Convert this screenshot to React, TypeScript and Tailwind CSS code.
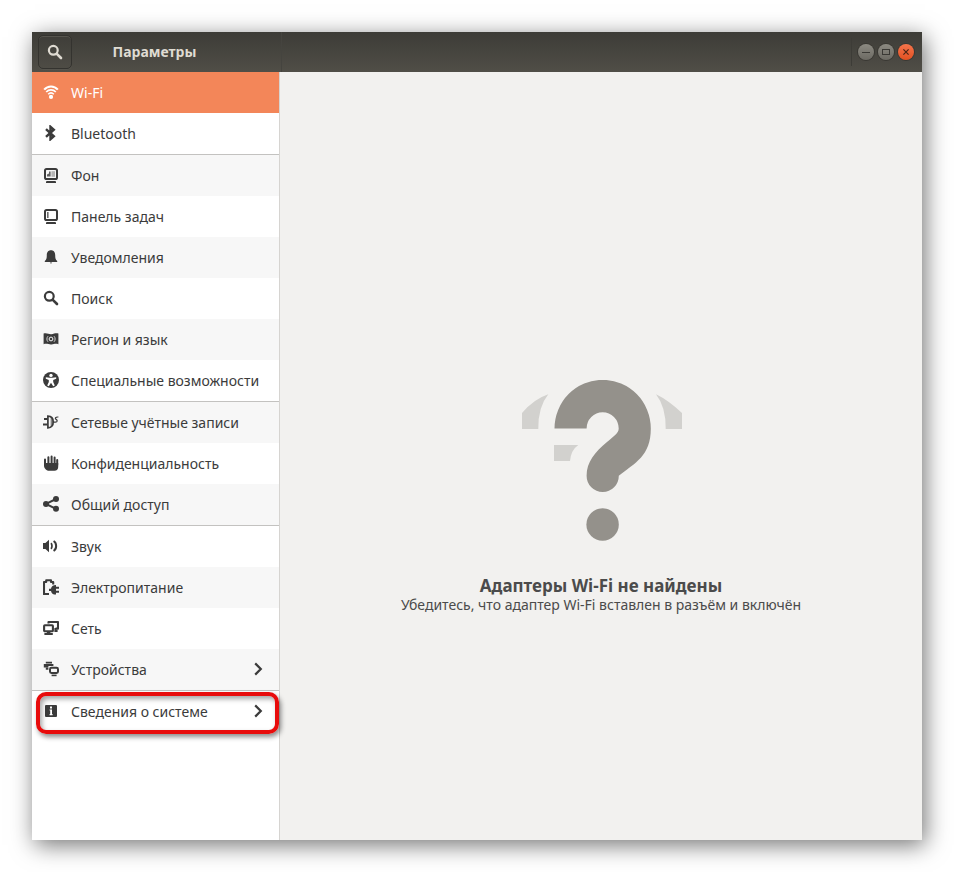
import { useState } from "react";
import type { ReactNode } from "react";

type Item = {
  id: string;
  label: string;
  icon: ReactNode;
  groupStart?: boolean;
  hasChildren?: boolean;
  marked?: boolean;
};

const Icon = ({ children }: { children: ReactNode }) => (
  <svg viewBox="0 0 16 16" className="h-4 w-4 shrink-0" fill="currentColor" aria-hidden="true">
    {children}
  </svg>
);

const SearchIcon = () => (
  <Icon>
    <circle cx="6.3" cy="6.3" r="4.4" fill="none" stroke="currentColor" strokeWidth="2.2" />
    <path d="M9.8 9.8L14 14" stroke="currentColor" strokeWidth="2.6" strokeLinecap="round" />
  </Icon>
);

const ChevronIcon = () => (
  <Icon>
    <path d="M5.2 2.4L10.8 8L5.2 13.6" fill="none" stroke="currentColor" strokeWidth="2.2" />
  </Icon>
);

const items: Item[] = [
  {
    id: "wifi",
    label: "Wi-Fi",
    icon: (
      <Icon>
        <circle cx="8" cy="12.9" r="2.1" />
        <g fill="none" stroke="currentColor">
          <path d="M1.2 5.6C4.8 1.4 11.2 1.4 14.8 5.6" strokeWidth="2.1" />
          <path d="M3.2 8C5.8 5.2 10.2 5.2 12.8 8" strokeWidth="1.7" />
          <path d="M5.2 10.2C6.8 8.6 9.2 8.6 10.8 10.2" strokeWidth="1.6" />
        </g>
      </Icon>
    ),
  },
  {
    id: "bluetooth",
    label: "Bluetooth",
    icon: (
      <Icon>
        <path d="M3 4.2L10.8 11.3L7.5 14.2V1.8L10.8 4.7L3 11.8" fill="none" stroke="currentColor" strokeWidth="2.4" />
      </Icon>
    ),
  },
  {
    id: "background",
    label: "Фон",
    groupStart: true,
    icon: (
      <Icon>
        <rect x="2" y="2" width="12" height="10" rx="1.6" fill="none" stroke="currentColor" strokeWidth="2" />
        <path d="M4 14h8a1 1 0 0 1 1 1v1H3v-1a1 1 0 0 1 1-1z" />
        <path d="M4 9.5V7.6L6 6.6V4.6H7.6V9.5z" opacity=".8" />
        <path d="M8.4 4.2H12V9.8H8.4z" opacity=".35" />
      </Icon>
    ),
  },
  {
    id: "dock",
    label: "Панель задач",
    icon: (
      <Icon>
        <rect x="2" y="2" width="12" height="10" rx="1.6" fill="none" stroke="currentColor" strokeWidth="2" />
        <path d="M4 4h1.6v6H4z" opacity=".75" />
        <path d="M4 14h8a1 1 0 0 1 1 1v1H3v-1a1 1 0 0 1 1-1z" />
      </Icon>
    ),
  },
  {
    id: "notifications",
    label: "Уведомления",
    icon: (
      <Icon>
        <path d="M8 1.2C5 1.2 3.8 3.5 3.8 6.2C3.8 9.3 3.4 10.7 1.8 12V13H14.2V12C12.6 10.7 12.2 9.3 12.2 6.2C12.2 3.5 11 1.2 8 1.2z" />
        <path d="M6.8 13.6H9.2L8 14.8z" />
      </Icon>
    ),
  },
  { id: "search", label: "Поиск", icon: <SearchIcon /> },
  {
    id: "region",
    label: "Регион и язык",
    icon: (
      <Icon>
        <path d="M.6 2.6C4 1.6 6 3.6 8.5 3.2C11 2.8 13 1.8 15.4 2.6V13.2C12.5 12.3 11 13.2 8.5 13.5C6 13.8 4 12.2 .6 13.2z" />
        <g fill="none" stroke="#f7f7f7">
          <circle cx="8" cy="8" r="1.9" strokeWidth="1" />
          <path d="M5 5.2C3.5 6.8 3.5 9.2 5 10.8M11 5.2C12.5 6.8 12.5 9.2 11 10.8" strokeWidth=".8" />
        </g>
      </Icon>
    ),
  },
  {
    id: "accessibility",
    label: "Специальные возможности",
    icon: (
      <Icon>
        <circle cx="8" cy="8" r="8" />
        <circle cx="8" cy="3.4" r="1.7" fill="#fff" />
        <path d="M2.8 5.2L6.5 5.8H9.5L13.2 5.2V6.8L10.2 8V10L11.8 13.6L10.2 14.2L8 10.8L5.8 14.2L4.2 13.6L5.8 10V8L2.8 6.8z" fill="#fff" />
      </Icon>
    ),
  },
  {
    id: "accounts",
    label: "Сетевые учётные записи",
    groupStart: true,
    icon: (
      <Icon>
        <path d="M1 4H4.4V6H1zM0 9.6H4.4V11.6H0z" />
        <path d="M4.9 2.2C8.8 2.2 10.2 5 10.2 8S8.8 13.8 4.9 13.8z" fill="none" stroke="currentColor" strokeWidth="1.7" />
        <path d="M7.6 3V13C9.2 12.3 9.8 10.5 9.8 8S9.2 3.7 7.6 3z" opacity=".6" />
        <path d="M10.5 8.2H12.4C14.8 8.2 14.4 6 13.2 5.4C11.8 4.7 12 2.8 15.4 3" fill="none" stroke="currentColor" strokeWidth="1.2" />
      </Icon>
    ),
  },
  {
    id: "privacy",
    label: "Конфиденциальность",
    icon: (
      <Icon>
        <path
          d="M2 4.5V9M5.4 2.2V9M8.6 1.6V9M11.6 2.4V9M14.2 5V10"
          fill="none"
          stroke="currentColor"
          strokeWidth="2"
          strokeLinecap="round"
        />
        <path d="M1 8H15.2V12C15.2 14.4 13.8 15.8 11.4 15.8H6C3 15.8 1 13 1 10.5z" />
      </Icon>
    ),
  },
  {
    id: "sharing",
    label: "Общий доступ",
    icon: (
      <Icon>
        <path d="M13 3L3 7.9L13 12.8" fill="none" stroke="currentColor" strokeWidth="2" />
        <circle cx="3" cy="7.9" r="3" />
        <circle cx="13" cy="3" r="3" />
        <circle cx="13" cy="12.8" r="3" />
      </Icon>
    ),
  },
  {
    id: "sound",
    label: "Звук",
    groupStart: true,
    icon: (
      <Icon>
        <path d="M0 5H2.4L6 1.8V14.2L2.4 11H0z" />
        <path d="M8 5.2C9.3 6.6 9.3 9.4 8 10.8" fill="none" stroke="currentColor" strokeWidth="1.7" />
        <path d="M10.6 3C14 5 14 11 10.6 13" fill="none" stroke="currentColor" strokeWidth="2" />
      </Icon>
    ),
  },
  {
    id: "power",
    label: "Электропитание",
    icon: (
      <Icon>
        <path d="M6 15H1V3H3.2V1.2H8V3H10.2V5.5" fill="none" stroke="currentColor" strokeWidth="2.1" strokeLinejoin="round" />
        <path d="M13 6V15.6C10 15.6 8.3 14 8 11.9H6V9.7H8C8.3 7.6 10 6 13 6zM13 7.8H16V9.8H13zM13 11.8H16V13.8H13z" />
      </Icon>
    ),
  },
  {
    id: "network",
    label: "Сеть",
    icon: (
      <Icon>
        <path d="M5.5 3.6V2H15V8.6H12.6" fill="none" stroke="currentColor" strokeWidth="2.1" strokeLinejoin="round" />
        <path d="M11.4 8H13.4V10H14.6V12H11.4z" />
        <rect x="1.1" y="5.2" width="8.8" height="6" rx=".8" fill="none" stroke="currentColor" strokeWidth="2.1" />
        <path d="M3.8 12H7.4V13H9.8V15H1.4V13H3.8z" />
      </Icon>
    ),
  },
  {
    id: "devices",
    label: "Устройства",
    hasChildren: true,
    icon: (
      <Icon>
        <path d="M2.8 .8H9V2.4H2.8zM.8 3H10.4V5H5.4V6.4H.8zM2.8 6.8H5.4V8.8H2.8z" />
        <rect x="7" y="6.8" width="8" height="5.2" rx="1.4" fill="none" stroke="currentColor" strokeWidth="2" />
        <path d="M8.6 13.6H13.6V15.2H8.6z" />
      </Icon>
    ),
  },
  {
    id: "about",
    label: "Сведения о системе",
    groupStart: true,
    hasChildren: true,
    marked: true,
    icon: (
      <Icon>
        <rect x="2" y="2" width="12" height="12" rx="1" />
        <path d="M7 3.6H9V5.4H7zM6.6 6.4H9V11H9.6V12.2H6.6V11H7.2V7.6H6.6z" fill="#fff" />
      </Icon>
    ),
  },
];

const HeaderBar = () => (
  <header className="flex h-10 shrink-0 items-center bg-linear-to-b from-[#3d3c37] to-[#504e47] text-[#dfdbd2]">
    <div className="flex h-full w-[250px] shrink-0 items-center border-r border-[#45443f] pl-1.5">
      <button
        type="button"
        aria-label="Поиск"
        className="flex h-[34px] w-[34px] items-center justify-center rounded-[5px] border border-[#34332f] shadow-[inset_0_1px_0_#56544d,0_1px_0_#56544d]"
      >
        <SearchIcon />
      </button>
      <h1 className="flex-1 pr-11 text-center text-sm font-bold">Параметры</h1>
    </div>
    <div className="flex h-full flex-1 items-center justify-end gap-1 pr-2">
      <span className="mr-0.5 h-7 w-px bg-[#3d3c37]" />
      <button type="button" aria-label="Свернуть" className="h-4 w-4 rounded-full bg-linear-to-b from-[#8c8a82] to-[#6c6a63] text-[#3a3935] ring-1 ring-[#393833]">
        <Icon>
          <path d="M4 8H12V9H4z" />
        </Icon>
      </button>
      <button type="button" aria-label="Развернуть" className="h-4 w-4 rounded-full bg-linear-to-b from-[#8c8a82] to-[#6c6a63] text-[#3a3935] ring-1 ring-[#393833]">
        <Icon>
          <rect x="4.5" y="5.5" width="7" height="5" fill="none" stroke="currentColor" />
        </Icon>
      </button>
      <button type="button" aria-label="Закрыть" className="h-4 w-4 rounded-full bg-linear-to-b from-[#f5744b] to-[#e2501f] text-[#4a2415] ring-1 ring-[#393833]">
        <Icon>
          <path d="M5.4 5.4L10.6 10.6M10.6 5.4L5.4 10.6" stroke="currentColor" strokeWidth="1.2" />
        </Icon>
      </button>
    </div>
  </header>
);

const EmptyState = () => (
  <main className="flex flex-1 flex-col items-center justify-center bg-[#f2f1ef] pt-[82px] text-center text-[#4b4b4b]">
    <svg viewBox="0 0 162 162" className="h-[162px] w-[162px]" aria-hidden="true">
      <g fill="#d2d1ce">
        <path d="M2 49V33Q14 19 28.3 14.3Q18 27 18.3 49Z" />
        <path d="M162 49V33Q148 20 136 14.3Q146 27 145.7 49Z" />
        <path d="M34 65V81H50Q51 70 58.3 65Z" />
      </g>
      <g fill="#94918b">
        <path d="M34.5 48.5A48 48.5 0 0 1 130.8 48.5C130.8 76 115 83 98.8 95.7A16 16.3 0 0 1 66.6 95.7C66.6 82 75 72 87 62C94 56 98.7 53 98.7 48.5A16 16.3 0 0 0 66.6 48.5Z" />
        <circle cx="82.6" cy="144.5" r="16.2" />
      </g>
    </svg>
    <h2 className="mt-[34px] text-[17px] leading-5 font-bold">Адаптеры Wi-Fi не найдены</h2>
    <p className="text-sm leading-[18px]">Убедитесь, что адаптер Wi-Fi вставлен в разъём и включён</p>
  </main>
);

const App = () => {
  const [selected, setSelected] = useState("wifi");

  return (
    <div className="flex min-h-screen bg-white p-8 font-['Noto_Sans',sans-serif]">
      <div className="flex flex-1 flex-col shadow-[3px_5px_22px_rgba(0,0,0,0.55)]">
        <HeaderBar />
        <div className="flex flex-1">
          <nav className="w-[248px] shrink-0 border-r border-[#d6d4d1] bg-white">
            <ul>
              {items.map((item) => (
                <li
                  key={item.id}
                  className={`relative even:bg-white odd:bg-[#f7f7f7] ${item.groupStart ? "border-t border-[#c3c2c0]" : ""}`}
                >
                  <button
                    type="button"
                    onClick={() => setSelected(item.id)}
                    className={`flex h-[41px] w-full items-center gap-3 pr-[13px] pb-px pl-[11px] text-left text-sm whitespace-nowrap ${
                      selected === item.id ? "bg-[#f38659] text-white" : "text-[#3b3b3b]"
                    }`}
                  >
                    {item.icon}
                    <span className="flex-1 pt-0.5">{item.label}</span>
                    {item.hasChildren && <ChevronIcon />}
                  </button>
                  {item.marked && (
                    <span className="pointer-events-none absolute top-px right-0 -bottom-0.5 left-1 rounded-[10px] border-4 border-[#e80c0c] shadow-[2px_3px_5px_rgba(0,0,0,0.45),inset_2px_3px_5px_rgba(0,0,0,0.35)]" />
                  )}
                </li>
              ))}
            </ul>
          </nav>
          <EmptyState />
        </div>
      </div>
    </div>
  );
};

export default App;
